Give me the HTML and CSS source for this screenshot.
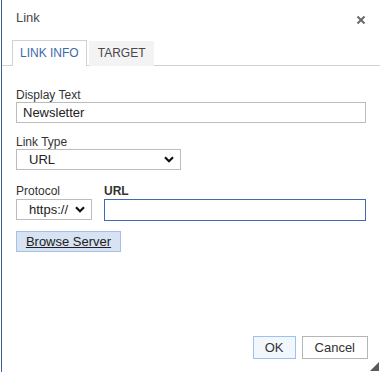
FILE: index.html
```html
<!DOCTYPE html>
<html>
<head>
<meta charset="utf-8">
<link rel="stylesheet" href="styles.css">
</head>
<body>
<div class="dialog">
  <div class="titlebar">
    <span class="title">Link</span>
    <svg class="close" width="10" height="10" viewBox="0 0 10 10"><path d="M1.5 1.5 L8.5 8.5 M8.5 1.5 L1.5 8.5" stroke="#6a6a6a" stroke-width="2" fill="none"/></svg>
  </div>
  <div class="tabs">
    <div class="tab active">LINK INFO</div>
    <div class="tab">TARGET</div>
  </div>
  <div class="content">
    <div class="field">
      <div class="label">Display Text</div>
      <div class="input full">Newsletter</div>
    </div>
    <div class="field">
      <div class="label">Link Type</div>
      <div class="select linktype"><span>URL</span>
        <svg width="10" height="7" viewBox="0 0 10 7"><path d="M1 1.2 L5 5.2 L9 1.2" stroke="#111" stroke-width="2.2" fill="none"/></svg>
      </div>
    </div>
    <div class="row">
      <div class="field">
        <div class="label">Protocol</div>
        <div class="select protocol"><span>https://</span>
          <svg width="10" height="7" viewBox="0 0 10 7"><path d="M1 1.2 L5 5.2 L9 1.2" stroke="#111" stroke-width="2.2" fill="none"/></svg>
        </div>
      </div>
      <div class="field grow">
        <div class="label bold">URL</div>
        <div class="input url"></div>
      </div>
    </div>
    <div class="browse"><span>Browse Server</span></div>
  </div>
  <div class="footer">
    <div class="btn ok">OK</div>
    <div class="btn">Cancel</div>
  </div>
  <div class="resize"></div>
</div>
</body>
</html>
```
FILE: styles.css
```css
html, body {
  margin: 0;
  padding: 0;
  background: #fff;
}
body {
  width: 380px;
  height: 372px;
  overflow: hidden;
  font-family: "Liberation Sans", Arial, sans-serif;
  font-size: 12px;
  color: #333;
}
.dialog {
  position: relative;
  margin-left: 1px;
  width: 379px;
  height: 372px;
  border-left: 1px solid #3c5f95;
  box-sizing: border-box;
  display: flex;
  flex-direction: column;
}
.titlebar {
  height: 40px;
  display: flex;
  align-items: flex-start;
  justify-content: space-between;
  box-sizing: border-box;
  padding: 10px 14px 0 14px;
}
.title {
  font-size: 13px;
  color: #484848;
  line-height: 16px;
}
.close {
  margin-top: 5px;
}
.tabs {
  display: flex;
  height: 26px;
  padding-left: 10px;
  border-bottom: 1px solid #d1d1d1;
  box-sizing: border-box;
  gap: 2px;
}
.tab {
  height: 25px;
  margin-top: 1px;
  padding: 0 9px;
  background: #f3f3f3;
  color: #484848;
  font-size: 12px;
  line-height: 24px;
  box-sizing: border-box;
}
.tab.active {
  margin-top: 0;
  height: 26px;
  background: #fff;
  color: #3b6aa8;
  border: 1px solid #d1d1d1;
  border-bottom: none;
  padding: 0 7px;
  line-height: 25px;
}
.content {
  padding: 22px 12px 0 14px;
  flex: 1;
}
.field {
  margin-bottom: 12px;
}
.label {
  line-height: 14px;
  color: #333;
}
.label.bold {
  font-weight: bold;
}
.input {
  height: 21px;
  border: 1px solid #bcbcbc;
  box-sizing: border-box;
  line-height: 19px;
  padding-left: 6px;
  font-size: 13px;
  color: #222;
}
.input.full {
  width: 350px;
}
.select {
  height: 21px;
  border: 1px solid #bcbcbc;
  box-sizing: border-box;
  display: flex;
  align-items: center;
  justify-content: space-between;
  padding: 0 6px 0 12px;
  font-size: 13px;
  color: #222;
}
.select.linktype {
  width: 165px;
}
.select.protocol {
  width: 76px;
  padding-right: 6px;
}
.row {
  display: flex;
  gap: 12px;
  margin-top: 14px;
}
.row .field {
  margin-bottom: 0;
}
.grow .label {
  margin-bottom: 1px;
}
.input.url {
  width: 262px;
  height: 22px;
  border: 1px solid #3f6cb0;
}
.row .field:first-child .select {
  margin-top: 1px;
}
.browse {
  margin-top: 10px;
  width: 105px;
  height: 21px;
  box-sizing: border-box;
  background: #d7e2f3;
  border: 1px solid #a8bfe3;
  text-align: center;
  line-height: 19px;
  font-size: 13px;
  color: #222;
}
.browse span {
  text-decoration: underline;
}
.footer {
  display: flex;
  justify-content: flex-end;
  gap: 6px;
  padding: 0 12px 13px 0;
}
.btn {
  height: 23px;
  box-sizing: border-box;
  border: 1px solid #b5b5b5;
  background: #fff;
  font-size: 13px;
  line-height: 21px;
  color: #333;
  padding: 0 12px;
}
.btn.ok {
  width: 43px;
  padding: 0;
  text-align: center;
  background: #f2f7fe;
  border-color: #9cc0ef;
}
.resize {
  position: absolute;
  right: 1px;
  bottom: 1px;
  width: 0;
  height: 0;
  border-left: 9px solid transparent;
  border-bottom: 9px solid #5a5a5a;
}
```
